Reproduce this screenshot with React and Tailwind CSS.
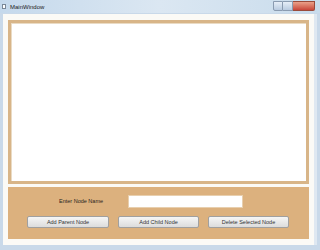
import React from 'react';

const App = () => {
  return (
    <div className="w-[320px] h-[250px] overflow-hidden bg-[#c9d9e9] flex flex-col" style={{ fontFamily: '"Liberation Sans", Arial, sans-serif' }}>
      {/* title bar */}
      <div className="h-[13px] flex items-center bg-gradient-to-r from-[#c5d9ec] via-[#dbe7f2] to-[#c9dcec] relative">
        <div className="ml-[2px] w-[4px] h-[5px] border border-[#7a8796] bg-white"></div>
        <span className="ml-[4px] text-[6px] leading-none text-[#1a1a1a]">MainWindow</span>
        <div className="ml-auto mr-[5px] flex h-[10px] self-start mt-[1px]">
          <div className="w-[10px] border border-[#8a9bb0] rounded-bl-[2px] bg-gradient-to-b from-[#e6eef7] to-[#b9cbe0]"></div>
          <div className="w-[10px] border border-l-0 border-[#8a9bb0] bg-gradient-to-b from-[#e6eef7] to-[#b9cbe0]"></div>
          <div className="w-[22px] border border-l-0 border-[#9a4a3a] rounded-br-[2px] bg-gradient-to-b from-[#e9a08a] to-[#c8453a]"></div>
        </div>
      </div>
      {/* client */}
      <div className="flex-1 mx-[3px] mb-[5px] mt-[1px] bg-[#fbfaf6] flex flex-col px-[5px] pt-[6px] pb-[6px] border-r-[3px] border-[#dfe8f1]">
        <div className="h-[164px] border-[3px] border-[#d8b588] bg-white shadow-[inset_1px_1px_0_#eadbc4]"></div>
        <div className="mt-[3px] h-[52px] bg-[#dcb17e] flex flex-col">
          <div className="flex items-center mt-[8px] h-[13px]">
            <span className="ml-[51px] w-[69px] text-[5.5px] text-[#2a241c]">Enter Node Name</span>
            <div className="w-[115px] h-[13px] bg-white border border-[#e8cfae]"></div>
          </div>
          <div className="flex mt-[8px] ml-[19px] gap-[9px]">
            <div className="w-[82px] h-[12px] border border-[#a0a0a0] rounded-[2px] bg-gradient-to-b from-[#f6f6f6] to-[#dcdcdc] flex items-center justify-center text-[5.5px] text-[#333]">Add Parent Node</div>
            <div className="w-[81px] h-[12px] border border-[#a0a0a0] rounded-[2px] bg-gradient-to-b from-[#f6f6f6] to-[#dcdcdc] flex items-center justify-center text-[5.5px] text-[#333]">Add Child Node</div>
            <div className="w-[81px] h-[12px] border border-[#a0a0a0] rounded-[2px] bg-gradient-to-b from-[#f6f6f6] to-[#dcdcdc] flex items-center justify-center text-[5.5px] text-[#333]">Delete Selected Node</div>
          </div>
        </div>
      </div>
    </div>
  );
};

export default App;
